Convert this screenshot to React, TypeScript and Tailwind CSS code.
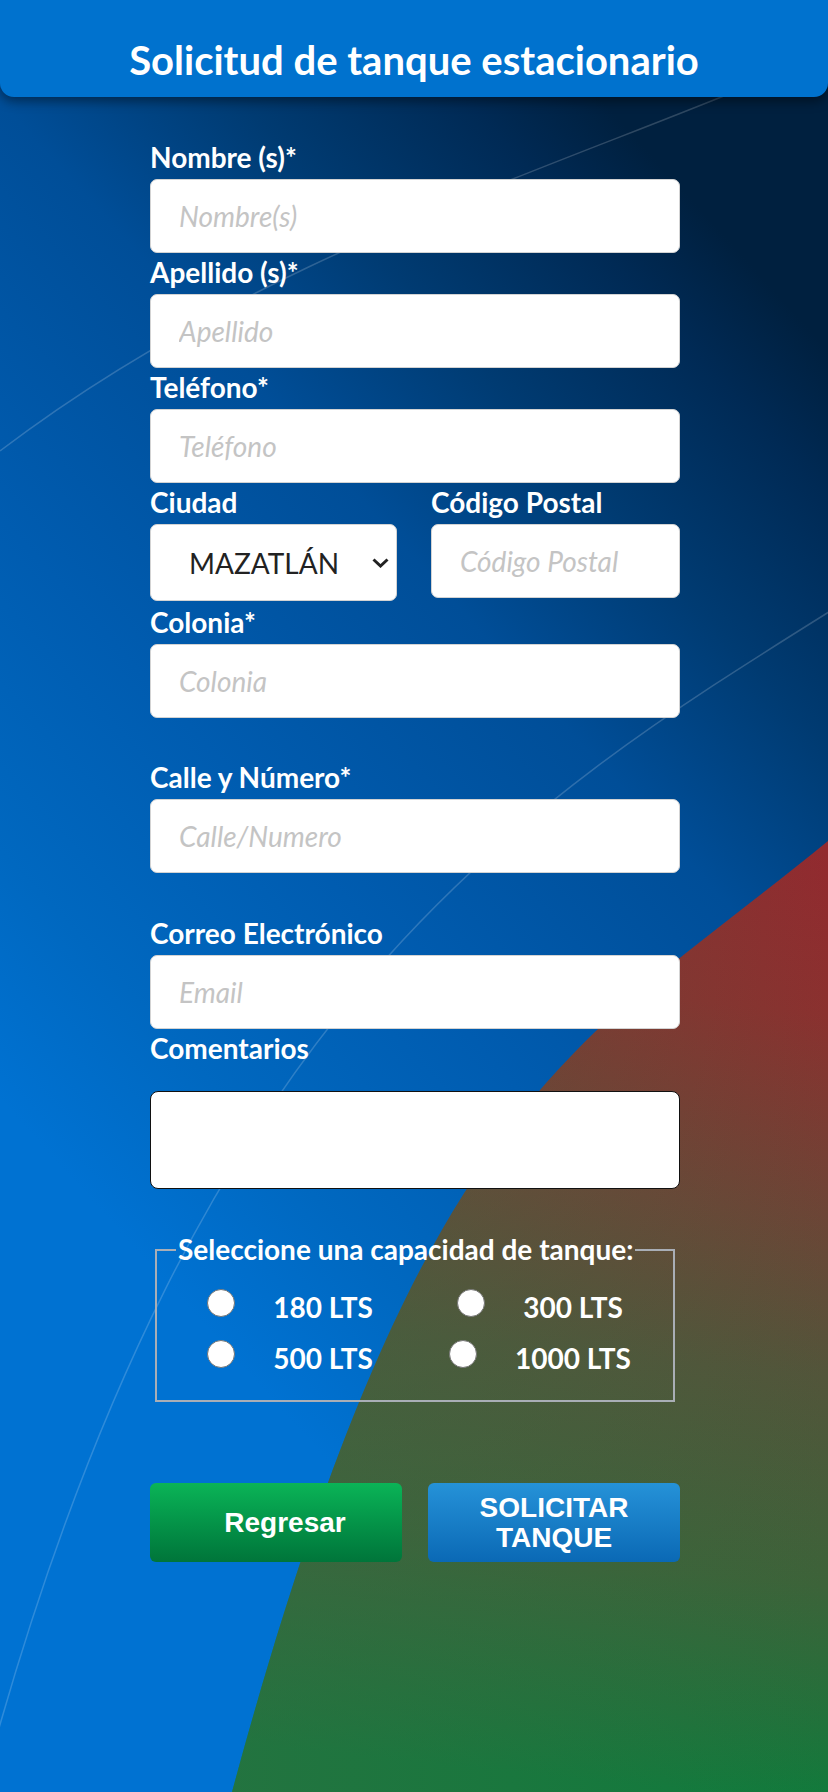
import React from "react";

const inputCls =
  "h-[74px] w-full rounded-[7px] border border-[#d3d3d3] bg-white pl-[28px] text-[28px] text-[#333] outline-none placeholder:italic placeholder:text-[#c4c4c4]";

const labelCls = "block text-[28px] leading-[31px] font-bold text-white";

type FieldProps = {
  label: string;
  placeholder: string;
  className?: string;
};

const Field = ({ label, placeholder, className }: FieldProps) => (
  <div className={className}>
    <label className={labelCls}>{label}</label>
    <input type="text" placeholder={placeholder} className={`mt-[6px] ${inputCls}`} />
  </div>
);

const Background = () => (
  <svg
    className="absolute inset-0 h-full w-full"
    viewBox="0 0 828 1792"
    preserveAspectRatio="none"
  >
    <defs>
      <linearGradient id="bg" gradientUnits="userSpaceOnUse" x1="0" y1="1100" x2="828" y2="350">
        <stop offset="0" stopColor="#0072d2" />
        <stop offset="0.15" stopColor="#0068c0" />
        <stop offset="0.35" stopColor="#005cb0" />
        <stop offset="0.6" stopColor="#004e98" />
        <stop offset="0.76" stopColor="#003b72" />
        <stop offset="0.91" stopColor="#002a55" />
        <stop offset="1" stopColor="#00203f" />
      </linearGradient>
      <linearGradient id="blob" gradientUnits="userSpaceOnUse" x1="800" y1="850" x2="700" y2="1792">
        <stop offset="0" stopColor="#922a2f" />
        <stop offset="0.17" stopColor="#8a312f" />
        <stop offset="0.38" stopColor="#6c4536" />
        <stop offset="0.55" stopColor="#52553a" />
        <stop offset="0.77" stopColor="#3c6339" />
        <stop offset="1" stopColor="#107b3c" />
      </linearGradient>
      <linearGradient id="blobTint" gradientUnits="userSpaceOnUse" x1="230" y1="0" x2="828" y2="0">
        <stop offset="0" stopColor="#3a6a44" stopOpacity="0.45" />
        <stop offset="1" stopColor="#3a6a44" stopOpacity="0" />
      </linearGradient>
    </defs>
    <rect width="828" height="1792" fill="url(#bg)" />
    <path d="M 840 832 L 828 841 C 578 1046 421 1092 232 1792 L 840 1792 Z" fill="url(#blob)" />
    <path d="M 840 832 L 828 841 C 578 1046 421 1092 232 1792 L 840 1792 Z" fill="url(#blobTint)" />
    <path d="M 775 75 C 550 170 250 260 0 451" stroke="rgba(255,255,255,0.18)" strokeWidth="1.5" fill="none" />
    <path d="M 840 605 C 520 805 200 1000 -10 1760" stroke="rgba(255,255,255,0.18)" strokeWidth="1.5" fill="none" />
  </svg>
);

const Radio = ({ label }: { label: string }) => (
  <label className="flex h-[40px] items-center justify-center gap-[38px]">
    <input
      type="radio"
      name="capacidad"
      className="mb-[8px] h-[28px] w-[28px] appearance-none rounded-full border-[1.5px] border-[#767676] bg-white"
    />
    <span className="text-[28px] font-bold text-white">{label}</span>
  </label>
);

export default function App() {
  return (
    <div className="relative min-h-[1792px] overflow-hidden font-['Lato','Noto_Sans',sans-serif]">
      <Background />

      <div className="relative">
        {/* Header */}
        <header className="flex h-[97px] items-center justify-center rounded-b-[14px] bg-[#0072ce] pt-[22px] shadow-[0_4px_12px_rgba(0,0,0,0.45)]">
          <h1 className="text-[40px] font-bold text-white">Solicitud de tanque estacionario</h1>
        </header>

        {/* Form */}
        <form className="ml-[150px] w-[530px] pt-[45px]">
          <Field label="Nombre (s)*" placeholder="Nombre(s)" />
          <Field label="Apellido (s)*" placeholder="Apellido" className="mt-[4px]" />
          <Field label="Teléfono*" placeholder="Teléfono" className="mt-[4px]" />

          <div className="mt-[4px] grid grid-cols-[247px_249px] gap-x-[34px]">
            <div>
              <label className={labelCls}>Ciudad</label>
              <div className="relative mt-[6px]">
                <select className="h-[77px] w-full appearance-none rounded-[7px] border border-[#d3d3d3] bg-white pl-[38px] text-[28px] text-[#222] outline-none">
                  <option>MAZATLÁN</option>
                </select>
                <svg
                  className="pointer-events-none absolute right-[8px] top-[34px]"
                  width="17"
                  height="10"
                  viewBox="0 0 17 10"
                >
                  <polyline points="1.5,1.5 8.5,8 15.5,1.5" fill="none" stroke="#222" strokeWidth="3" />
                </svg>
              </div>
            </div>
            <Field label="Código Postal" placeholder="Código Postal" />
          </div>

          <Field label="Colonia*" placeholder="Colonia" className="mt-[6px]" />
          <Field label="Calle y Número*" placeholder="Calle/Numero" className="mt-[44px]" />
          <Field label="Correo Electrónico" placeholder="Email" className="mt-[45px]" />

          <div className="mt-[4px]">
            <label className={labelCls}>Comentarios</label>
            <textarea className="mt-[27px] block h-[98px] w-full resize-none rounded-[8px] border-[1.5px] border-[#111] bg-white outline-none" />
          </div>

          {/* Capacidad */}
          <fieldset className="mx-[5px] mt-[45px] border-2 border-[#a9aeb6] px-[8px] pb-[22px]">
            <legend className="ml-[11px] px-[2px] text-[28px] leading-[31px] font-bold text-white">
              Seleccione una capacidad de tanque:
            </legend>
            <div className="grid grid-cols-2 gap-y-[11px] pt-[22px]">
              <Radio label="180 LTS" />
              <Radio label="300 LTS" />
              <Radio label="500 LTS" />
              <Radio label="1000 LTS" />
            </div>
          </fieldset>

          {/* Buttons */}
          <div className="mt-[81px] grid grid-cols-2 gap-[26px] font-['Liberation_Sans',Arial,sans-serif]">
            <button
              type="button"
              className="h-[79px] rounded-[6px] bg-linear-to-b from-[#0bb457] to-[#00753a] pl-[18px] text-[28px] font-bold text-white"
            >
              Regresar
            </button>
            <button
              type="button"
              className="h-[79px] rounded-[6px] bg-linear-to-b from-[#2592d8] to-[#0a69b5] text-[28px] leading-[30px] font-bold text-white"
            >
              SOLICITAR
              <br />
              TANQUE
            </button>
          </div>
        </form>
      </div>
    </div>
  );
}
